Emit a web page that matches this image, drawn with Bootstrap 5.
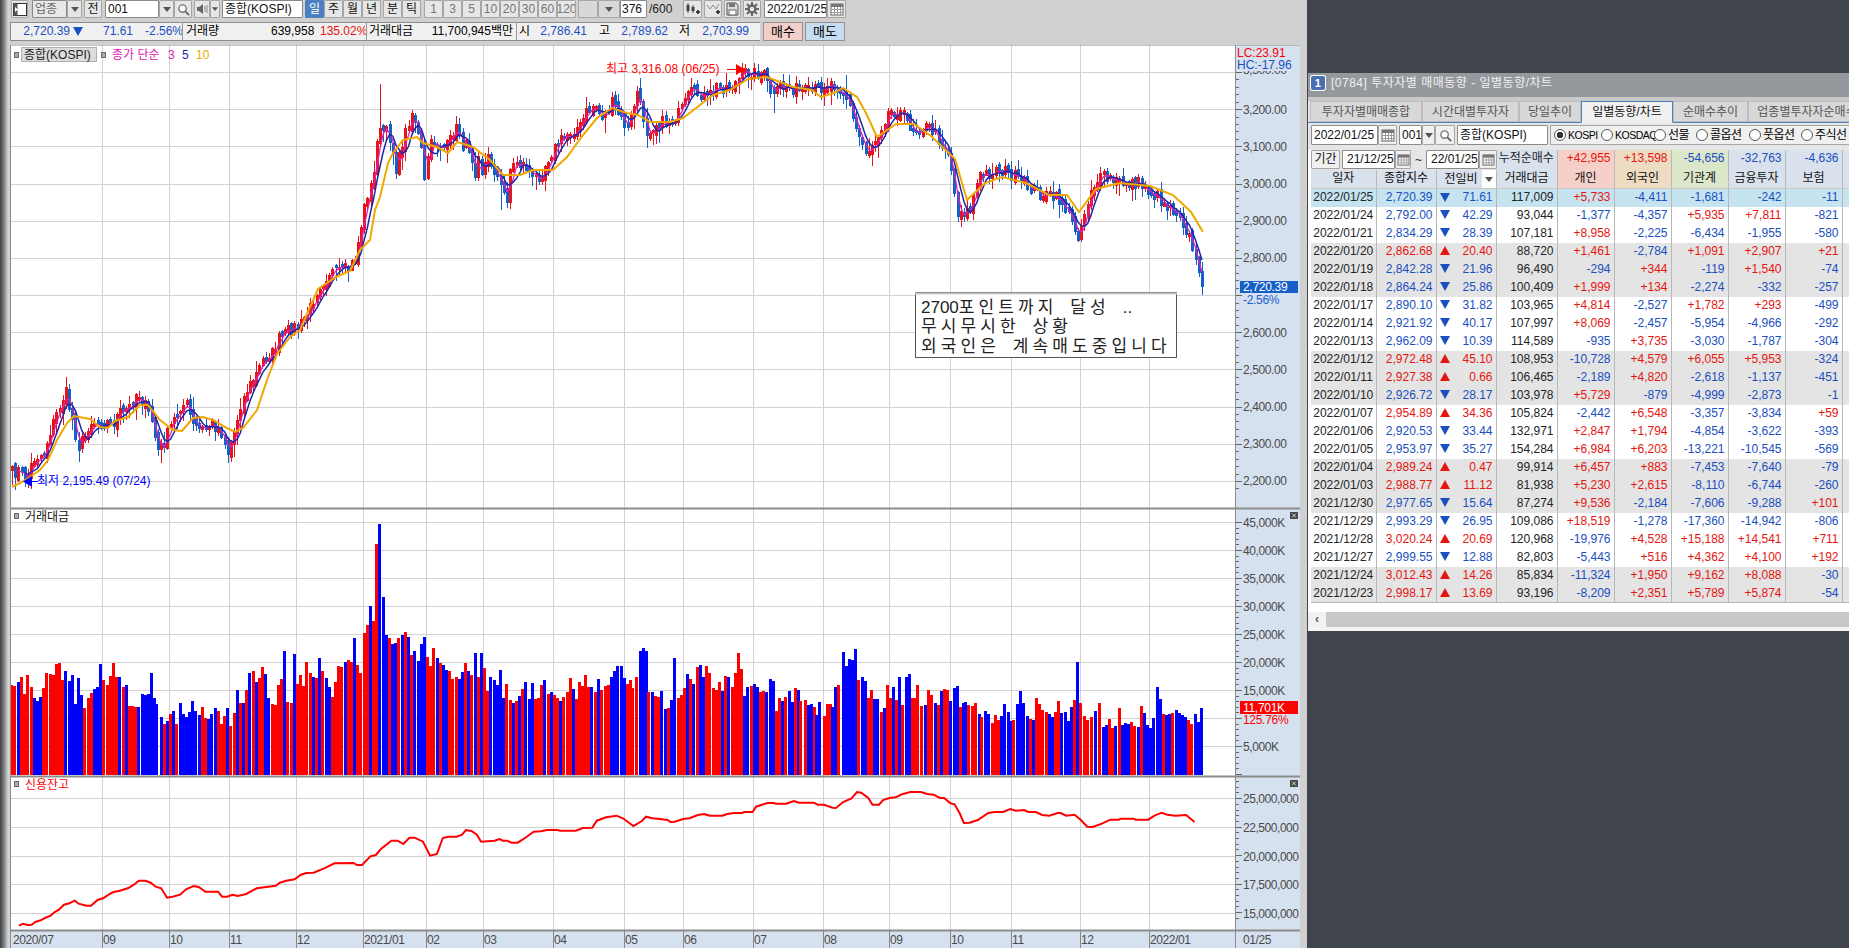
<!DOCTYPE html>
<html lang="ko"><head><meta charset="utf-8"><title>HTS</title>
<link href="https://cdn.jsdelivr.net/npm/bootstrap@5.3.0/dist/css/bootstrap.min.css" rel="stylesheet">
<style>
html,body{height:948px;overflow:hidden}
body{background:#40444c;font:12px/16px "Liberation Sans","Noto Sans CJK KR",sans-serif;color:#000;width:1849px}
.leftwin{width:1307px;height:948px;flex:none;background:linear-gradient(90deg,#3e4046 0,#6a6c70 3px,#a8a8a8 6px,#d4d4d4 8px,#d0d0d0 10px);position:relative}
.tb1{height:19px;padding-left:11px;margin-bottom:3px}
.tb2{height:19px;margin-left:10px;margin-bottom:4px;width:833px}
.tk{height:18px;padding:0;border:1px solid #a6a6a6;background:#e6e6e6;border-radius:1px;font-size:12px;line-height:15px;color:#111;display:flex;align-items:center;justify-content:center;flex:none;white-space:nowrap;overflow:hidden}
.tk.dim{color:#777}
.tk.act{background:#4c80c2;color:#fff;border-color:#4c80c2}
.tk.blank{background:#d8d8d8}
.fld{background:#fff;justify-content:flex-start;padding-left:2px;border-color:#8a8a8a}
.fld.gr{background:#e8e8e8;color:#666}
.w10{width:10px}.w14{width:14px}.w15{width:15px}.w16{width:16px}.w17{width:17px}.w18{width:18px}.w19{width:19px}.w20{width:20px}.w22{width:22px}.w27{width:27px}.w35{width:35px}.w54{width:54px}.w63{width:63px}.w81{width:81px}
.m2{margin-right:2px}.m3{margin-right:3px}.m4{margin-right:4px}
.sl{margin:0 11px 0 2px;line-height:18px;color:#222;width:23px}
.info{background:#f0f0f0;border:1px solid #8c8c8c;border-width:1px 0 1px 1px;width:750px;height:19px;line-height:17px;white-space:nowrap;overflow:hidden;flex:none}
.cl{display:inline-block;flex:none;text-align:right}
.cl.lft{text-align:left}
.up{color:#e6150f}.dn{color:#1a4fc0}
.sep{border-left:1px solid #9a9a9a;height:17px;flex:none}
.a1{margin-left:11px;width:48px}.a2{margin-left:20px;width:27px}.a3{margin-left:15px;width:35px}
.s2{margin-left:2px}.s3{margin-left:3px}
.i1{margin-left:3px;width:85px}.i2{width:40px}.i3{margin-left:9px;width:43px}.i4{margin-left:2px;width:60px}.i5{margin-left:2px;width:82px}.i6{margin-left:2px;width:20px}.i7{width:48px}.i8{margin-left:12px;width:21px}.i9{width:48px}.i10{margin-left:11px;width:22px}.i11{width:48px}
.bs{width:40px;height:19px;border:1px solid #9a8f8f;font-size:13px;line-height:17px;text-align:center;flex:none;margin-left:2px}
.buy{background:#f3cfca;margin-left:3px}.sell{background:#c6dcf1}
.chartbox{width:1290px;height:903px;margin-left:10px}
#chart{display:block}
#chart text{font-family:"Liberation Sans","Noto Sans CJK KR",sans-serif;font-size:12px}
#chart .ax{fill:#4a4a4a;letter-spacing:-.4px}
#chart .ax3{fill:#4a4a4a;letter-spacing:-.45px}
#chart .note{font-size:17px;fill:#222;letter-spacing:4.1px;word-spacing:4px}
#chart .note .nar{letter-spacing:0}
.desk{padding:73px 0 0 1px;flex:1 1 0;min-width:0}
.invwin{height:558px;width:541px;background:#e6e6e6;overflow:hidden}
.ttl{height:28px;display:flex;align-items:center;padding:0 0 4px 3px;background:#95999e;color:#f0f0f0;letter-spacing:.5px;border-bottom:4px solid #c8c8c8;white-space:nowrap}
.one{width:14px;height:14px;background:#4a6fb0;color:#fff;border-radius:2px;text-align:center;line-height:14px;font-weight:700;font-size:11px;margin-right:6px;box-shadow:0 0 0 1px #fff}
.tabs{flex-wrap:nowrap;height:22px;padding-left:2px;border-bottom:1px solid #4a80c0;width:700px;--bs-nav-tabs-border-width:0}
.tabs .nav-link{height:21px;padding:0;border:1px solid #bdbdbd;border-radius:0;background:#d8d8d8;color:#555;font-size:12px;line-height:20px;text-align:center;margin:0}
.tabs .nav-link.active{background:#f0f0f0;color:#111;border-color:#4a80c0;border-bottom-color:#f0f0f0;height:22px}
.t1{width:112px}.t2{width:97px}.t3{width:62px}.t4{width:92px}.t5{width:75px}.t6{width:118px}
.rbar{height:22px;padding:0 0 0 3px;display:flex;align-items:center;margin-top:1px;white-space:nowrap}
.rbar .tk{height:20px;background:#f0f0f0}
.rbar .fld{background:#fff;color:#111}
.rw66{width:67px}.rw18{width:19px}.rw23{width:23px}.rw13{width:13px}.rw20{width:20px}.rw91{width:91px}
.rbox{height:20px;flex:none;width:300px;background:#f0f0f0;border:1px solid #a6a6a6;margin-left:2px;display:flex;align-items:center;padding-left:3px;overflow:hidden}
.rd{width:12px;height:12px;margin:0 2px 0 0!important;flex:none;border-color:#555;background:#fff}
.rd:checked{background:radial-gradient(circle,#333 0,#333 3px,#fff 3.5px);border-color:#555}
.rl{flex:none;letter-spacing:-.6px}
.rl.lat{font-size:10.5px;letter-spacing:-.5px}
.r1{width:33px}.r2{width:39px}.r3{width:28px}.r4{width:39px}.r5{width:38px}.r6{width:40px}
.tw{margin-top:4px;padding-left:3px;overflow:hidden;height:462px;background:#fff}
.dt{table-layout:fixed;width:551px;margin:0;font-size:12px;line-height:16px;background:#fff;border-bottom:1px solid #b8b8b8}
.dt td{padding:0 3px 0 0;height:18px;text-align:right;border-right:1px solid #b8b8b8;white-space:nowrap;overflow:visible}
.dt td.dc{text-align:center;padding:0}
.dt td.hc{text-align:center;background-color:#d8e1ec;padding:0;border-bottom:1px solid #c8c8c8;color:#111}
.dt td.pk{background-color:#f5d0c8}.dt td.tn{background-color:#eddcc1}.dt td.gn{background-color:#dce6c9}
.dt tr.sel td{background-color:#c6e3f0}
.dt tr.rg td{background-color:#e4e4e4}
.dt td.hdr{background-color:#e6e6e6;border-right:0;text-align:left;height:20px;padding:0}
.dt td.sum{background-color:#d8e1ec;height:20px}
.dt td.sum.pk{background-color:#f5d0c8}.dt td.sum.tn{background-color:#eddcc1}.dt td.sum.gn{background-color:#dce6c9}
.dt td.up{color:#e6150f}.dt td.dn{color:#1a4fc0}
.c0{width:65px}.c1{width:60px}.c2{width:60px}.c3{width:61px}.c4{width:57px}
.tri{width:0;height:0;border-left:5px solid transparent;border-right:5px solid transparent;display:block;margin-left:3px;flex:none}
.tri.d{border-top:9px solid #1a4fc0}.tri.u{border-bottom:9px solid #e6150f}
.info .tri{align-self:center}
.ctl{height:19px;align-items:center;white-space:nowrap}
.ctl .tk{height:19px;background:#f0f0f0}
.ctl .fld{background:#fff;color:#111}
.w29{width:29px}.w53{width:53px}
.scroll{height:15px;background:#c8c8c8;display:flex}
.sbt{width:18px;background:#f2f2f2;color:#555;text-align:center;line-height:14px;font-size:12px;font-weight:700}
.foot{height:4px;background:#f4f4f4}
</style></head>
<body class="d-flex">
<svg width="0" height="0" class="position-absolute"><defs>
<symbol id="cal" viewBox="0 0 14 13"><rect x="1" y="1" width="12" height="11" fill="#fff" stroke="#666"/><rect x="1" y="1" width="12" height="3" fill="#777"/><path d="M1 6.5h12M1 9.500h12M4.500 4v8M7.500 4v8M10.500 4v8" stroke="#999" fill="none"/></symbol>
<symbol id="mag" viewBox="0 0 14 14"><circle cx="6" cy="6" r="4" fill="#fff" stroke="#777" stroke-width="1.500"/><path d="M9 9l4 4" stroke="#666" stroke-width="2"/></symbol>
<symbol id="dwn" viewBox="0 0 8 5"><path d="M0 0h8L4 5z" fill="#555"/></symbol>
</defs></svg>
<div class="leftwin d-flex flex-column">
 <div class="tb1 d-flex">
  <div class="tk w17 m4"><svg width="14" height="13" viewBox="0 0 14 13"><rect x=".5" y=".5" width="13" height="12" fill="#fff" stroke="#333"/><rect x=".5" y=".5" width="4" height="12" fill="#555"/><path d="M2 4l3 2.500L2 9z" fill="#fff"/></svg></div>
  <div class="tk fld gr w35">업종</div><div class="tk w15 m2"><svg width="8" height="5"><use href="#dwn"/></svg></div>
  <div class="tk w18 m3">전</div>
  <div class="tk fld w54">001</div><div class="tk w15"><svg width="8" height="5"><use href="#dwn"/></svg></div>
  <div class="tk w18 m2"><svg width="13" height="13"><use href="#mag"/></svg></div>
  <div class="tk w16"><svg width="12" height="12" viewBox="0 0 12 12"><path d="M1 4h2l4-3v10L3 8H1z" fill="#666"/><path d="M9 3v6M11 2v8" stroke="#888"/></svg></div><div class="tk w10 m2"><svg width="6" height="4"><use href="#dwn"/></svg></div>
  <div class="tk fld w81 m2">종합(KOSPI)</div>
  <div class="tk act w19">일</div><div class="tk w19">주</div><div class="tk w19">월</div><div class="tk w19 m2">년</div>
  <div class="tk w19">분</div><div class="tk w19 m3">틱</div>
  <div class="tk dim w19">1</div><div class="tk dim w19">3</div><div class="tk dim w19">5</div><div class="tk dim w19">10</div><div class="tk dim w19">20</div><div class="tk dim w19">30</div><div class="tk dim w19">60</div><div class="tk dim w19 m2">120</div>
  <div class="tk blank w20"></div><div class="tk blank w22"><svg width="8" height="5"><use href="#dwn"/></svg></div>
  <div class="tk fld w27 justify-content-end pe-1">376</div><div class="sl">/600</div>
  <div class="tk w19 m2"><svg width="15" height="14" viewBox="0 0 15 14"><path d="M3 1v10M8 3v8" stroke="#444"/><rect x="1.500" y="3" width="3" height="6" fill="#444"/><rect x="6.500" y="5" width="3" height="4" fill="#444"/><path d="M11 10h4M13 8v4" stroke="#222" stroke-width="1.500"/></svg></div>
  <div class="tk w18 m2"><svg width="15" height="14" viewBox="0 0 15 14"><path d="M1 3l3 4 3-4 3 4 3-5" stroke="#888" fill="none"/><path d="M10 10h4M12 8v4" stroke="#222" stroke-width="1.500"/></svg></div>
  <div class="tk w17 m2"><svg width="13" height="14" viewBox="0 0 13 14"><path d="M1 1h9l2 2v10H1z" fill="#ddd" stroke="#555"/><rect x="3" y="1" width="6" height="4" fill="#777"/><rect x="3" y="8" width="7" height="5" fill="#fff" stroke="#666"/></svg></div>
  <div class="tk w18 m3"><svg width="14" height="14" viewBox="0 0 14 14"><circle cx="7" cy="7" r="3.500" fill="none" stroke="#666" stroke-width="2.500"/><path d="M7 0v3M7 11v3M0 7h3M11 7h3M2 2l2 2M10 10l2 2M2 12l2-2M10 4l2-2" stroke="#666" stroke-width="2"/></svg></div>
  <div class="tk fld w63">2022/01/25</div><div class="tk w19"><svg width="14" height="13"><use href="#cal"/></svg></div>
 </div>
 <div class="tb2 d-flex">
  <div class="info d-flex">
   <span class="cl dn a1">2,720.39</span><span class="tri d"></span><span class="cl dn a2">71.61</span><span class="cl dn a3">-2.56%</span>
   <span class="sep s2"></span><span class="cl lft i1">거래량</span>
   <span class="cl i2">639,958</span><span class="cl up i3">135.02%</span><span class="sep s3"></span><span class="cl lft i4">거래대금</span>
   <span class="cl i5">11,700,945백만</span><span class="sep s3"></span><span class="cl lft i6">시</span>
   <span class="cl dn i7">2,786.41</span><span class="cl lft i8">고</span><span class="cl dn i9">2,789.62</span><span class="cl lft i10">저</span><span class="cl dn i11">2,703.99</span>
  </div>
  <div class="bs buy">매수</div><div class="bs sell">매도</div>
 </div>
 <div class="chartbox"><svg id="chart" width="1290" height="903" viewBox="10 45 1290 903"></svg></div>
</div>
<div class="desk">
 <section class="invwin">
  <div class="ttl"><span class="one">1</span>[0784] 투자자별 매매동향 - 일별동향/차트</div>
  <ul class="nav nav-tabs tabs">
   <li><a class="nav-link t1" href="#">투자자별매매종합</a></li><li><a class="nav-link t2" href="#">시간대별투자자</a></li><li><a class="nav-link t3" href="#">당일추이</a></li><li><a class="nav-link active t4" href="#">일별동향/차트</a></li><li><a class="nav-link t5" href="#">순매수추이</a></li><li><a class="nav-link t6" href="#">업종별투자자순매수</a></li>
  </ul>
  <div class="rbar">
   <div class="tk fld rw66">2022/01/25</div><div class="tk rw18 m2"><svg width="14" height="13"><use href="#cal"/></svg></div>
   <div class="tk fld rw23">001</div><div class="tk rw13"><svg width="8" height="5"><use href="#dwn"/></svg></div><div class="tk rw20 m2"><svg width="13" height="13"><use href="#mag"/></svg></div>
   <div class="tk fld rw91">종합(KOSPI)</div>
   <div class="rbox">
    <input class="form-check-input rd" type="radio" name="mk" checked aria-label="KOSPI"><span class="rl lat r1">KOSPI</span>
    <input class="form-check-input rd" type="radio" name="mk" aria-label="KOSDAQ"><span class="rl lat r2">KOSDAQ</span>
    <input class="form-check-input rd" type="radio" name="mk" aria-label="선물"><span class="rl r3">선물</span>
    <input class="form-check-input rd" type="radio" name="mk" aria-label="콜옵션"><span class="rl r4">콜옵션</span>
    <input class="form-check-input rd" type="radio" name="mk" aria-label="풋옵션"><span class="rl r5">풋옵션</span>
    <input class="form-check-input rd" type="radio" name="mk" aria-label="주식선"><span class="rl r6">주식선</span>
   </div>
  </div>
  <div class="tw">
   <table class="table table-borderless dt">
    <colgroup><col class="c0"><col class="c1"><col class="c2"><col class="c3"><col class="c4"><col class="c4"><col class="c4"><col class="c4"><col class="c4"><col></colgroup>
    <tbody id="tbody">
     <tr><td colspan="3" class="hdr"><div class="d-flex ctl"><div class="tk w29 m2">기간</div><div class="tk fld w53 ps-1 pe-0">21/12/25</div><div class="tk w16"><svg width="13" height="12"><use href="#cal"/></svg></div><span class="ms-1 me-1">~</span><div class="tk fld w53 ps-1 pe-0">22/01/25</div><div class="tk w18"><svg width="13" height="12"><use href="#cal"/></svg></div></div></td>
      <td class="sum dc">누적순매수</td><td class="sum pk up">+42,955</td><td class="sum tn up">+13,598</td><td class="sum gn dn">-54,656</td><td class="sum dn">-32,763</td><td class="sum dn">-4,636</td><td class="sum"></td></tr>
     <tr><td class="hc">일자</td><td class="hc">종합지수</td><td class="hc"><div class="d-flex justify-content-between align-items-center ps-2"><span>전일비</span><span class="tk w14 bg-white border-0"><svg width="8" height="5"><use href="#dwn"/></svg></span></div></td><td class="hc">거래대금</td><td class="hc pk">개인</td><td class="hc tn">외국인</td><td class="hc gn">기관계</td><td class="hc">금융투자</td><td class="hc">보험</td><td class="hc"></td></tr>
    </tbody>
   </table>
  </div>
  <div class="scroll"><div class="sbt">&lsaquo;</div></div>
  <div class="foot"></div>
 </section>
</div>
<script>
const rows=`2022/01/25|2,720.39|d|71.61|117,009|+5,733|-4,411|-1,681|-242|-11
2022/01/24|2,792.00|d|42.29|93,044|-1,377|-4,357|+5,935|+7,811|-821
2022/01/21|2,834.29|d|28.39|107,181|+8,958|-2,225|-6,434|-1,955|-580
2022/01/20|2,862.68|u|20.40|88,720|+1,461|-2,784|+1,091|+2,907|+21
2022/01/19|2,842.28|d|21.96|96,490|-294|+344|-119|+1,540|-74
2022/01/18|2,864.24|d|25.86|100,409|+1,999|+134|-2,274|-332|-257
2022/01/17|2,890.10|d|31.82|103,965|+4,814|-2,527|+1,782|+293|-499
2022/01/14|2,921.92|d|40.17|107,997|+8,069|-2,457|-5,954|-4,966|-292
2022/01/13|2,962.09|d|10.39|114,589|-935|+3,735|-3,030|-1,787|-304
2022/01/12|2,972.48|u|45.10|108,953|-10,728|+4,579|+6,055|+5,953|-324
2022/01/11|2,927.38|u|0.66|106,465|-2,189|+4,820|-2,618|-1,137|-451
2022/01/10|2,926.72|d|28.17|103,978|+5,729|-879|-4,999|-2,873|-1
2022/01/07|2,954.89|u|34.36|105,824|-2,442|+6,548|-3,357|-3,834|+59
2022/01/06|2,920.53|d|33.44|132,971|+2,847|+1,794|-4,854|-3,622|-393
2022/01/05|2,953.97|d|35.27|154,284|+6,984|+6,203|-13,221|-10,545|-569
2022/01/04|2,989.24|u|0.47|99,914|+6,457|+883|-7,453|-7,640|-79
2022/01/03|2,988.77|u|11.12|81,938|+5,230|+2,615|-8,110|-6,744|-260
2021/12/30|2,977.65|d|15.64|87,274|+9,536|-2,184|-7,606|-9,288|+101
2021/12/29|2,993.29|d|26.95|109,086|+18,519|-1,278|-17,360|-14,942|-806
2021/12/28|3,020.24|u|20.69|120,968|-19,976|+4,528|+15,188|+14,541|+711
2021/12/27|2,999.55|d|12.88|82,803|-5,443|+516|+4,362|+4,100|+192
2021/12/24|3,012.43|u|14.26|85,834|-11,324|+1,950|+9,162|+8,088|-30
2021/12/23|2,998.17|u|13.69|93,196|-8,209|+2,351|+5,789|+5,874|-54`.split('\n');
const grp=['sel','','','rg','rg','rg','','','','rg','rg','rg','','','','rg','rg','rg','','','','rg','rg'];
let h='';
rows.forEach((r,i)=>{const f=r.split('|');const c=f[2]=='u'?'up':'dn';
 const sg=v=>v[0]=='+'?'up':'dn';
 h+=`<tr class="${grp[i]}"><td class="dc">${f[0]}</td><td class="${c}">${f[1]}</td><td class="${c}"><div class="d-flex justify-content-between align-items-center"><span class="tri ${f[2]}"></span><span>${f[3]}</span></div></td><td>${f[4]}</td>`+f.slice(5).map(v=>`<td class="${sg(v)}">${v}</td>`).join('')+`<td></td></tr>`;});
document.getElementById('tbody').insertAdjacentHTML('beforeend',h);

const A=1236,R=1300,L=10;
const months=[[12,'2020/07',0],[102,'09'],[169,'10'],[229,'11'],[296,'12'],[363,'2021/01'],[426,'02'],[483,'03'],[553,'04'],[624,'05'],[683,'06'],[753,'07'],[823,'08'],[889,'09'],[950,'10'],[1011,'11'],[1080,'12'],[1149,'2022/01']];
let s='';
const GR='#d2d2d2';
s+=`<rect x="${L}" y="45" width="${A-L}" height="885" fill="#fff"/><rect x="${A}" y="45" width="${R-A}" height="903" fill="#d6e1ef"/><rect x="${L}" y="931" width="${R-L}" height="17" fill="#d6e1ef"/>`;
months.forEach((m,i)=>{if(i)s+=`<path d="M${m[0]+.5} 45V930" stroke="${GR}"/>`;});
const hl=(y)=>`<path d="M${L} ${y+.5}H${A}" stroke="${GR}"/>`;
const yp=p=>72+(3300-p)*.3718;
for(let p=3300;p>=2200;p-=100)s+=hl(Math.round(yp(p)));
for(let v=45000,y=522;v>=5000;v-=5000,y+=28)s+=hl(y);
[798,827,856,884,913].forEach(y=>s+=hl(y));
const K=[[12,473],[18,470],[23,477],[27,478],[33,460],[43,455],[50,433],[57,413],[62,402],[65,390],[72,417],[78,447],[85,437],[90,423],[100,423],[113,423],[120,413],[128,410],[137,393],[143,402],[152,420],[157,450],[162,448],[170,428],[180,408],[187,405],[193,425],[203,430],[213,423],[222,433],[228,453],[235,430],[240,407],[248,388],[255,378],[263,360],[273,353],[278,340],[287,332],[300,325],[309,312],[318,289],[330,273],[348,270],[355,258],[360,233],[363,213],[368,193],[373,183],[377,137],[383,130],[390,137],[397,173],[400,153],[407,127],[412,113],[415,120],[422,153],[425,187],[428,153],[433,140],[440,147],[447,147],[453,133],[458,127],[463,147],[470,147],[475,173],[478,150],[482,173],[487,157],[495,170],[502,190],[507,197],[510,170],[517,162],[527,167],[533,180],[542,173],[548,160],[558,143],[567,135],[580,127],[587,112],[595,105],[600,115],[605,115],[612,103],[622,120],[628,130],[637,93],[640,103],[647,133],[655,125],[663,123],[670,122],[680,113],[690,93],[700,93],[705,100],[717,87],[728,87],[737,83],[743,72],[753,73],[763,73],[773,97],[780,87],[790,87],[807,93],[830,83],[839,87],[848,100],[854,123],[861,140],[867,153],[878,135],[888,113],[896,110],[901,113],[914,130],[924,127],[932,130],[949,153],[957,212],[969,212],[979,177],[1000,169],[1014,177],[1032,189],[1043,195],[1061,200],[1079,236],[1091,189],[1102,177],[1120,183],[1138,183],[1155,195],[1167,206],[1179,212],[1191,242],[1197,263],[1202,288]];
const O=[[12,487],[20,483],[30,477],[40,470],[48,460],[57,440],[67,423],[74,416],[90,419],[100,427],[108,428],[115,421],[128,417],[140,405],[148,405],[160,420],[173,430],[182,431],[193,418],[203,417],[213,420],[227,428],[235,432],[243,428],[257,410],[267,380],[277,354],[290,337],[300,330],[318,289],[336,277],[350,271],[360,250],[370,240],[375,210],[380,197],[388,163],[393,153],[403,140],[417,137],[423,143],[437,147],[448,153],[457,142],[473,147],[490,160],[503,175],[520,175],[533,170],[553,170],[567,157],[583,135],[597,118],[612,108],[627,113],[638,115],[650,122],[670,122],[683,118],[700,105],[713,95],[730,90],[748,79],[767,77],[793,87],[812,90],[821,97],[834,93],[843,88],[857,97],[866,113],[877,137],[896,124],[914,124],[931,136],[955,159],[967,200],[985,183],[1002,177],[1026,183],[1049,195],[1067,195],[1079,212],[1096,189],[1120,183],[1150,186],[1173,195],[1191,212],[1203,232]];
const itp=(T,x)=>{if(x<=T[0][0])return T[0][1];for(let i=1;i<T.length;i++)if(x<=T[i][0]){const a=T[i-1],b=T[i];return a[1]+(b[1]-a[1])*(x-a[0])/(b[0]-a[0]);}return T[T.length-1][1];};
let seed=7;const rnd=()=>{seed=(seed*16807)%2147483647;return seed/2147483647;};
const xs=[],cl=[];for(let i=0;i<376;i++){const x=12+i*3.173;xs.push(x);cl.push(itp(K,x)+(i>372?0:(rnd()-.5)*11));}
const CR='#e8141c',CB='#1560c8';
cl.forEach((c,i)=>{const o=i?cl[i-1]+(rnd()-.5)*7:c+2;let top=Math.min(o,c),bot=Math.max(o,c);const up=c<o;const col=up?CR:CB;
 if(i<375){top-=1.5;bot+=1.5;}
 let hi=top-rnd()*rnd()*12-1,lo=bot+rnd()*rnd()*14+1;const x=Math.round(xs[i]);
 if(Math.abs(x-379)<2)hi=84; if(Math.abs(x-773)<2)lo=113; if(Math.abs(x-500)<2)lo=210; if(Math.abs(x-846)<2){hi=75;} if(i==375){lo=295;hi=262;}
 s+=`<path d="M${x+.5} ${hi.toFixed(0)}V${lo.toFixed(0)}" stroke="${col}"/><rect x="${x-1}" y="${top.toFixed(0)}" width="3" height="${Math.max(2,bot-top).toFixed(0)}" fill="${col}"/>`;});
const ma=n=>{let p=[];for(let i=n-1;i<376;i++){let t=0;for(let j=0;j<n;j++)t+=cl[i-j];p.push(xs[i].toFixed(1)+' '+(t/n).toFixed(1));}return 'M'+p.join('L');};
s+=`<path d="${ma(3)}" fill="none" stroke="#e020b0" stroke-width="1.300"/><path d="${ma(5)}" fill="none" stroke="#1a28a8" stroke-width="1.500"/>`;
s+=`<path d="M${O.map(p=>p.join(' ')).join('L')}" fill="none" stroke="#f0a800" stroke-width="2"/>`;
s+=`<text x="606" y="73" fill="#f00">최고 3,316.08 (06/25)</text><path d="M727 69.500h12" stroke="#f00"/><path d="M736 64l9 5.500-9 5.500z" fill="#f00"/>`;
s+=`<text x="37" y="485" fill="#00f">최저 2,195.49 (07/24)</text><path d="M29 481.500h9" stroke="#00f"/><path d="M32 476l-9 5.500 9 5.500z" fill="#00f"/>`;
const V1="28r555 35r558 43b546 51r531 58r582 65r525 74r561 81b594 89b603 96b591 103r564 110r519 119r522 127r525 134r492 141r489 148r540 155b513 165b543 172b525 179b612 186b534 193b585 200r624 210r594 217r579 224b567 231b561 238b492 245r540 255r555 262r528 269r489 276r531 283b531 293r561 300b555 307r618 314r618 321r621 328b621 338b582 345b585 352b582 359b519 366b594 373b612 383b651 390r672 397b663 405r642 412b633 419r672 428b609 435b642 443b651 450b636 457b603 464b633 473b645 480r621 488r654 495b657 502b642 512b624 519r633 526r672 533r648 540b624 547r678 557r639 564b570 571r609 578b609 585r570 592b519 602r513 609b546 616r534 623r501 630b522 637b594 647r612 654r615 661r555 668r537 675b453 683r606 692r609 699b462 706r552 713r525 720r558 728r486 737r519 744b531 751r534 758b474 766r513 775b534 782b561 789r591 796r546 804r498 811r501 820b486 827r480 834r486 842b414 849r495 856r519 865r399 873r375 880b318 887r363 895r132 901b72 911b291 918b405 925r414 933b432 940b429 946r414 956b405 964r396 971b411 978r465 985b453 994b483 1001b432 1008b411 1015r471 1022r498 1029r444 1039b474 1046r489 1053b495 1060b510 1067r513 1074r537 1084r531 1091b537 1098b516 1105r489 1112b513 1120r525 1129b459 1136r531 1143b459 1151r504 1158r573 1165b531 1174b540 1181b555 1189b510 1196b594 1203r552 1212r600 1219b609 1227r603 1234b588 1241r567 1248b546 1257b597 1265b549 1272r597 1279r594 1286r555 1293b540 1303r582 1310b576 1317r585 1324r594 1331b603 1338r591 1348r576 1355r534 1362b567 1369r597 1376r546 1383r558 1392r525 1399r561 1406b561 1414r576 1421b537 1428r570 1438r558 1445r555 1452b531 1459b513 1466b498 1476b498 1483b534 1490r552 1497r540 1504r564 1512r531 1521b453 1528b444 1535b453 1542r576 1551b576 1558r588 1565r591";
const V2="3b153 13b207 20r204 28b180 34b54 44r174 51r165 58r144 65b102 72r117 79b132 89r81 96b75 103b111 110r78 117r99 127r144 134r150 141r126 148b153 155r108 162b111 172r141 179r99 186r39 193r87 200b168 208b141 217r138 224b132 231b141 239r156 246r153 253b156 262b117 269b123 276r213 283r174 291b183 298r171 307b153 314b186 321r144 328b150 335r183 345r180 352b195 359b192 366r201 373b225 380b186 390r228 397r192 404r192 411b201 418b141 425r135 436b36 443b78 450b57 457b60 464b27 471r120 481b111 488b123 495r174 502r150 509b177 516b177 526r216 533b204 540r135 547r174 554b141 561r180 569b111 576r195 585b111 592b102 599r174 606r174 613r135 621r198 630b195 637r150 644r165 654b189 661r195 668b153 675r147 682r150 690b183 699b144 706b138 713r201 720b189 727b186 734r195 743r198 750r189 758b222 765r231 773b213 780b222 789r249 797r225 804r240 811b228 818b192 827b216 834b243 841r240 849b192 856b153 863b189 873b228 880r237 887b240 894r174 901r192 908r210 918r216 925b222 932b231 939r216 946r183 953b219 964b216 971b243 978b201 985r180 991b66 999r189 1008r228 1015r240 1025r231 1035b213 1044r189 1054b261 1061b255 1068r237 1075r264 1083b258 1091r204 1098b255 1105b249 1112b252 1120r246 1127r258 1136b261 1143r198 1150b219 1158b255 1165b264 1173b234 1182b141 1190b177 1196r222 1204b225 1211b222 1218r219 1227b210 1234b219 1241b225 1248b231 1255r240 1262r252 1272b222 1279b246 1286b204";
const bar=(t,x0,y0)=>{const m=t.match(/(\d+)([rb])(\d+)/);const x=Math.round(x0+ +m[1]/2.376-1.5),y=Math.round(y0+ +m[3]/3);return `<rect x="${x}" y="${y}" width="3" height="${775-y}" fill="${m[2]=='r'?'#f00':'#00f'}"/>`;};
s+='<g shape-rendering="crispEdges">'+V1.split(' ').map(t=>bar(t,0,500)).join('')+V2.split(' ').map(t=>bar(t,660,640)).join('')+'</g>';
const C1=[[45,497],[55,491],[65,495],[75,494],[85,485],[97,481],[108,473],[120,467],[130,456],[140,449],[152,434],[165,430],[177,422],[187,431],[205,437],[216,437],[232,420],[245,415],[258,404],[270,396],[285,392],[305,384],[318,374],[330,362],[345,362],[358,368],[370,380],[383,385],[397,413],[410,410],[428,404],[442,388],[460,378],[472,381],[488,395],[518,395],[528,410],[540,410],[552,404],[565,408],[585,402],[610,385],[655,377],[665,368],[680,362],[700,358],[715,344],[728,339],[745,338],[770,325],[795,310],[840,309],[848,315],[860,315],[880,289],[893,285],[905,267],[930,242],[945,242],[958,252],[973,233],[985,233],[1005,245],[1022,287],[1038,282],[1052,234],[1065,230],[1085,230],[1098,224],[1107,210],[1120,213],[1133,224],[1143,245],[1175,242],[1187,237],[1195,242],[1205,242],[1215,248],[1230,248],[1250,232],[1268,215],[1285,214],[1300,210],[1325,210],[1330,212],[1368,212],[1385,204],[1407,203],[1418,182],[1440,172],[1465,167],[1480,175],[1505,198],[1525,183],[1535,170],[1550,175],[1568,177]];
const C2=[[18,540],[25,546],[35,545],[55,537],[70,535],[90,525],[105,522],[118,527],[148,527],[160,522],[175,519],[195,519],[200,516],[220,516],[228,500],[255,489],[270,489],[275,491],[300,491],[318,483],[330,488],[365,488],[375,494],[390,494],[410,503],[418,504],[435,486],[455,475],[468,456],[478,458],[495,474],[505,494],[520,494],[530,480],[545,474],[560,472],[575,463],[595,456],[620,456],[635,462],[650,464],[665,474],[675,474],[690,490],[700,493],[712,520],[722,549],[735,548],[755,540],[780,519],[795,516],[815,516],[832,507],[845,512],[865,510],[875,516],[893,516],[908,525],[925,527],[945,519],[952,519],[965,527],[985,524],[1000,540],[1015,560],[1028,561],[1050,551],[1070,539],[1090,539],[1095,536],[1125,536],[1130,539],[1160,539],[1175,527],[1192,518],[1205,524],[1225,527],[1250,525],[1270,546]];
const cp=C1.map(p=>[p[0]/2.376,760+p[1]/3]).concat(C2.map(p=>[660+p[0]/2.376,640+p[1]/3]));
s+=`<path d="M${cp.map(p=>p[0].toFixed(1)+' '+p[1].toFixed(1)).join('L')}" fill="none" stroke="#f00" stroke-width="2"/>`;
s+=`<path d="M${L} 45H${R}" stroke="#8c8c8c"/><path d="M${L} 508.500H${R}M${L} 776.500H${R}M${L} 930.500H${R}" stroke="#8c8c8c" stroke-width="2"/><path d="M${A-.5} 45V948" stroke="#8c8c8c"/><path d="M${L+.5} 45V948" stroke="#8c8c8c"/>`;
const tick=(y,maj)=>`<path d="M${A} ${Math.round(y)+.5}h${maj?6:3}" stroke="#666"/>`;
for(let p=3300;p>=2180;p-=20){const y=yp(p);s+=tick(y,p%100==0);}
for(let v=45000,y=522;v>=0;v-=1000,y+=5.6)s+=tick(y,v%5000==0);
for(let i=0;i<25;i++){const y=781+i*5.7;s+=tick(y,[3,8,13,18,23].includes(i));}
const fmt=n=>n.toLocaleString('en-US');
for(let p=3200;p>=2200;p-=100){if(p==2700)continue;s+=`<text class="ax" x="1243" y="${yp(p)+4.5}">${fmt(p)}.00</text>`;}
s+=`<text class="ax" x="1243" y="${yp(3300)+2}">3,300.00</text><rect x="1236" y="46" width="64" height="25" fill="#d6e1ef"/>`;
s+=`<text x="1237" y="57" fill="#f00">LC:23.91</text><text x="1237" y="69" fill="#1a4fc0">HC:-17.96</text>`;
s+=`<rect x="1240" y="281" width="58" height="12" fill="#1560c8"/><text x="1243" y="291" fill="#fff" letter-spacing="-.3">2,720.39</text><text x="1243" y="304" fill="#1a60d0" letter-spacing="-.3">-2.56%</text>`;
[45,40,35,30,25,20,15,5].forEach(v=>{const y=522+(45-v)*5.6;s+=`<text class="ax" x="1243" y="${y+4.5}">${v},000K</text>`;});
s+=`<rect x="1240" y="701" width="58" height="13" fill="#f00"/><text x="1243" y="711.500" fill="#fff" letter-spacing="-.3">11,701K</text><text x="1243" y="724" fill="#f00" letter-spacing="-.3">125.76%</text>`;
[[798,'25,000,000'],[827,'22,500,000'],[856,'20,000,000'],[884,'17,500,000'],[913,'15,000,000']].forEach(a=>s+=`<text class="ax3" x="1243" y="${a[0]+4.5}">${a[1]}</text>`);
months.forEach((m,i)=>{if(i)s+=`<path d="M${m[0]+.5} 931V948" stroke="#888"/>`;s+=`<text class="ax" x="${m[0]+1}" y="944">${m[1]}</text>`;});
s+=`<path d="M${A-.5} 931V948" stroke="#888"/><text class="ax" x="1243" y="944">01/25</text>`;
const hd=(x,y)=>`<rect x="${x+.5}" y="${y+.5}" width="4" height="5" fill="#aaa" stroke="#666"/>`;
s+=hd(14,52)+`<rect x="21.500" y="47.500" width="75" height="14" fill="#dcdcdc" stroke="#b0b0b0"/><text x="24" y="59" fill="#222">종합(KOSPI)</text>`+hd(101,52);
s+=`<text x="112" y="59" fill="#e020b0">종가 단순</text><text x="168" y="59" fill="#e020b0">3</text><text x="182" y="59" fill="#1a28a8">5</text><text x="196" y="59" fill="#f0a800">10</text>`;
s+=hd(14,513)+`<text x="25" y="521" fill="#111">거래대금</text>`+hd(14,781)+`<text x="25" y="789" fill="#f00">신용잔고</text>`;
const xb=(x,y)=>`<rect x="${x}" y="${y}" width="8" height="7" fill="#444"/><path d="M${x+2} ${y+1.5}l4 4m0-4l-4 4" stroke="#fff" stroke-width=".8"/>`;
s+=xb(1290,512)+xb(1290,780);
s+=`<rect x="915.500" y="292.500" width="261" height="65" fill="#fff" stroke="#555"/><path d="M915 293.500H1177" stroke="#c8c8c8" stroke-width="2"/>`;
s+=`<text class="note" x="921" y="313"><tspan class="nar">2700</tspan>포인트까지 달성 <tspan class="nar">..</tspan></text><text class="note" x="921" y="332">무시무시한 상황</text><text class="note" x="921" y="352">외국인은 계속매도중입니다</text>`;
document.getElementById('chart').innerHTML=s;
</script>
</body></html>
